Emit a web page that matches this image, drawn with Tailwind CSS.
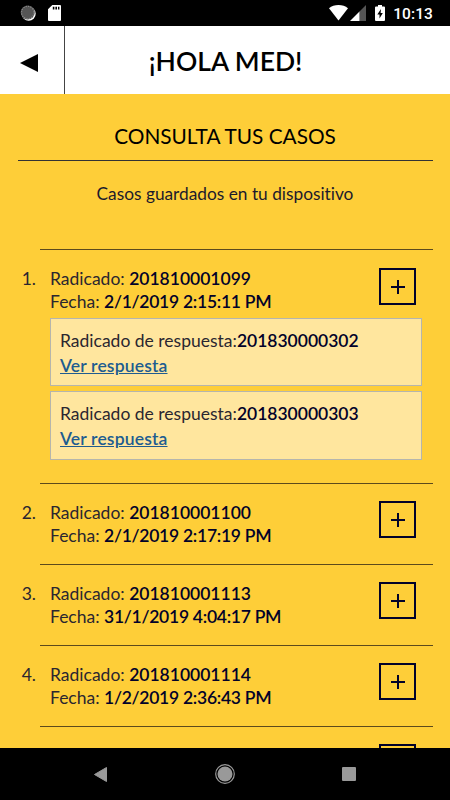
<!DOCTYPE html>
<html lang="es">
  <head>
    <meta charset="UTF-8" />
    <meta name="viewport" content="width=device-width, initial-scale=1.0" />
    <title>¡Hola Med! - Consulta tus casos</title>
    <script src="https://cdn.jsdelivr.net/npm/@tailwindcss/browser@4"></script>
  </head>
  <body class="bg-black">
    <div class="flex flex-col w-[450px] h-[800px] overflow-hidden font-['Lato',sans-serif] [font-variant-ligatures:none]">
      <!-- Status bar -->
      <div class="flex items-center justify-between h-[26px] shrink-0 bg-black pl-5 pr-[17px]">
        <div class="flex items-center gap-3">
          <svg class="w-4 h-4" viewBox="0 0 16 16">
            <circle cx="8.7" cy="8.7" r="7" fill="#fff" />
            <circle cx="7.7" cy="7.5" r="7" fill="#555" />
            <circle cx="7.7" cy="7.5" r="6.2" fill="none" stroke="#888" stroke-width="1.2" stroke-dasharray="1.2 1.2" />
          </svg>
          <svg class="w-[13px] h-4" viewBox="0 0 13 16">
            <path d="M4.3 0H12a1 1 0 0 1 1 1v14a1 1 0 0 1-1 1H1a1 1 0 0 1-1-1V4.3z" fill="#fff" />
            <path d="M4.8 1.8h1.6v2.8H4.8zM7.4 1.8H9v2.8H7.4zM10 1.8h1.4v2.8H10z" fill="#000" />
          </svg>
        </div>
        <div class="flex items-center">
          <svg class="w-[19px] h-4" viewBox="0 0 19 16">
            <path d="M0 3.2C2.6 1.1 5.8 0 9.5 0S16.4 1.1 19 3.2L9.5 15.5z" fill="#fff" />
          </svg>
          <svg class="w-4 h-4 ml-[2px]" viewBox="0 0 16 16">
            <path d="M16 0v16H9.5V6.500z" fill="#555" />
            <path d="M9.5 6.5V16H0z" fill="#fff" />
          </svg>
          <svg class="w-[10px] h-4 ml-[9px] mr-[8px]" viewBox="0 0 10 16">
            <path d="M3 0h4v1.5h2a1 1 0 0 1 1 1V15a1 1 0 0 1-1 1H1a1 1 0 0 1-1-1V2.5a1 1 0 0 1 1-1h2z" fill="#fff" />
            <path d="M6 4L2.3 9.5h2.2v4L7.8 8H5.6z" fill="#000" />
          </svg>
          <span class="mt-[2px] text-[15.5px] leading-4 tracking-[0.1px] font-medium text-white font-['Roboto',sans-serif]">10:13</span>
        </div>
      </div>

      <!-- Header -->
      <header class="flex h-[68px] shrink-0 bg-white">
        <div class="flex items-center w-[65px] pl-5 pt-[6px] border-r border-[#444]">
          <svg class="w-[18px] h-[18px]" viewBox="0 0 18 18">
            <path d="M0 9L18 0v18z" fill="#000" />
          </svg>
        </div>
        <h1 class="flex-1 pr-[64px] pt-[3px] text-center whitespace-nowrap text-[26.5px] leading-[64px] font-semibold text-black">¡HOLA MED!</h1>
      </header>

      <!-- Main Content -->
      <main class="flex-1 min-h-0 overflow-hidden bg-[#fece38] text-[#02022a] text-[17.5px] leading-[22.5px]">
        <h2 class="mx-[17.5px] h-[66.5px] pt-[29px] text-center text-[20.8px] leading-[26px] text-black border-b border-[#333]">CONSULTA TUS CASOS</h2>
        <p class="h-[88.5px] pt-[22px] text-center text-[17.3px] text-[#1c1a2c]">Casos guardados en tu dispositivo</p>

        <ol class="ml-10 mr-[17px]">
          <li class="relative h-[234px] pt-[18px] pl-[10px] pr-[11px] border-t border-[#5c4a1c]">
            <span class="absolute top-[18px] right-full mr-[4px] text-[#2a2630]">1.</span>
            <div class="flex justify-between">
              <p class="whitespace-nowrap text-[#2a2630]">Radicado: <b class="font-semibold text-[#02022a]">201810001099</b><br />Fecha: <b class="font-semibold text-[#02022a] tracking-[-0.27px]">2/1/2019 2:15:11 PM</b></p>
              <button class="flex items-center justify-center w-[37px] h-[37px] mr-[6px] border-2">
                <svg class="w-[14px] h-[14px]" viewBox="0 0 14 14"><path d="M7 0v14M0 7h14" stroke="currentColor" stroke-width="2" /></svg>
              </button>
            </div>
            <div class="mt-[5px] h-[68px] pt-[10px] pl-[9px] bg-[#ffe69e] border border-[#b5b5ad] leading-[24.5px]">
              <p class="text-[#2a2630]">Radicado de respuesta:<b class="font-semibold text-[#02022a]">201830000302</b></p>
              <a href="#" class="block font-semibold text-[#205c90] tracking-[0.17px] underline">Ver respuesta</a>
            </div>
            <div class="mt-[5px] h-[69px] pt-[10px] pl-[9px] bg-[#ffe69e] border border-[#b5b5ad] leading-[24.5px]">
              <p class="text-[#2a2630]">Radicado de respuesta:<b class="font-semibold text-[#02022a]">201830000303</b></p>
              <a href="#" class="block font-semibold text-[#205c90] tracking-[0.17px] underline">Ver respuesta</a>
            </div>
          </li>
          <li class="relative h-[81px] pt-[18px] pl-[10px] pr-[17px] border-t border-[#5c4a1c]">
            <span class="absolute top-[18px] right-full mr-[4px] text-[#2a2630]">2.</span>
            <div class="flex justify-between">
              <p class="whitespace-nowrap text-[#2a2630]">Radicado: <b class="font-semibold text-[#02022a]">201810001100</b><br />Fecha: <b class="font-semibold text-[#02022a] tracking-[-0.27px]">2/1/2019 2:17:19 PM</b></p>
              <button class="flex items-center justify-center w-[37px] h-[37px] -mt-px border-2">
                <svg class="w-[14px] h-[14px]" viewBox="0 0 14 14"><path d="M7 0v14M0 7h14" stroke="currentColor" stroke-width="2" /></svg>
              </button>
            </div>
          </li>
          <li class="relative h-[81px] pt-[18px] pl-[10px] pr-[17px] border-t border-[#5c4a1c]">
            <span class="absolute top-[18px] right-full mr-[4px] text-[#2a2630]">3.</span>
            <div class="flex justify-between">
              <p class="whitespace-nowrap text-[#2a2630]">Radicado: <b class="font-semibold text-[#02022a]">201810001113</b><br />Fecha: <b class="font-semibold text-[#02022a] tracking-[-0.27px]">31/1/2019 4:04:17 PM</b></p>
              <button class="flex items-center justify-center w-[37px] h-[37px] -mt-px border-2">
                <svg class="w-[14px] h-[14px]" viewBox="0 0 14 14"><path d="M7 0v14M0 7h14" stroke="currentColor" stroke-width="2" /></svg>
              </button>
            </div>
          </li>
          <li class="relative h-[81px] pt-[18px] pl-[10px] pr-[17px] border-t border-[#5c4a1c]">
            <span class="absolute top-[18px] right-full mr-[4px] text-[#2a2630]">4.</span>
            <div class="flex justify-between">
              <p class="whitespace-nowrap text-[#2a2630]">Radicado: <b class="font-semibold text-[#02022a]">201810001114</b><br />Fecha: <b class="font-semibold text-[#02022a] tracking-[-0.27px]">1/2/2019 2:36:43 PM</b></p>
              <button class="flex items-center justify-center w-[37px] h-[37px] -mt-px border-2">
                <svg class="w-[14px] h-[14px]" viewBox="0 0 14 14"><path d="M7 0v14M0 7h14" stroke="currentColor" stroke-width="2" /></svg>
              </button>
            </div>
          </li>
          <li class="flex justify-end h-[81px] pt-[17px] pr-[17px] border-t border-[#5c4a1c]">
            <button class="w-[37px] h-[37px] border-2"></button>
          </li>
        </ol>
      </main>

      <!-- Android navigation -->
      <nav class="flex items-center justify-between h-[52px] shrink-0 bg-black px-[94px]">
        <svg class="w-[13px] h-[15px]" viewBox="0 0 13 15"><path d="M.5 7.5L12.5.5v14z" fill="#999" stroke="#999" stroke-linejoin="round" /></svg>
        <svg class="w-5 h-5" viewBox="0 0 20 20">
          <circle cx="10" cy="10" r="9.3" fill="none" stroke="#999" stroke-width="1.2" />
          <circle cx="10" cy="10" r="7.5" fill="#999" />
        </svg>
        <div class="w-[14px] h-[14px] rounded-[1px] bg-[#999]"></div>
      </nav>
    </div>
  </body>
</html>
